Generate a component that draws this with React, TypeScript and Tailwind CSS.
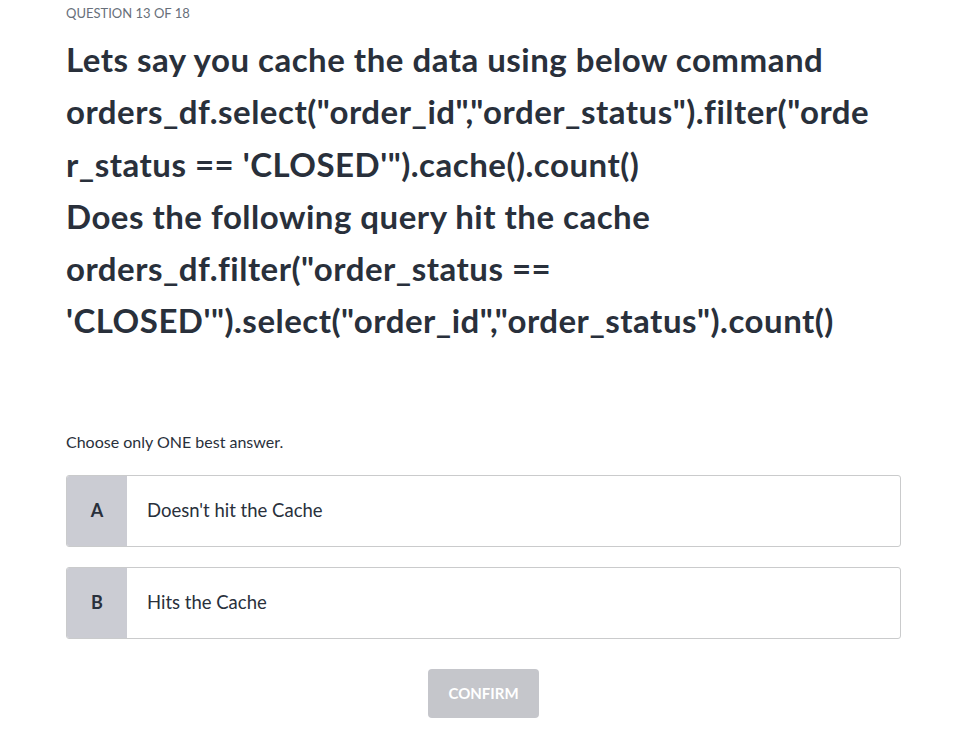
import React from 'react';

const titleLines = [
  'Lets say you cache the data using below command',
  'orders_df.select("order_id","order_status").filter("orde',
  "r_status == 'CLOSED'\").cache().count()",
  'Does the following query hit the cache',
  'orders_df.filter("order_status ==',
  "'CLOSED'\").select(\"order_id\",\"order_status\").count()",
];

const options = [
  { letter: 'A', text: "Doesn't hit the Cache" },
  { letter: 'B', text: 'Hits the Cache' },
];

const App: React.FC = () => {
  return (
    <div className="min-h-screen bg-white font-['Lato','Noto_Sans',sans-serif] text-[#29303b] [font-variant-ligatures:none]">
      <div className="ml-[66px] w-[835px] pt-[5px]">
        <div className="text-[13px] leading-[16px] text-[#686f7a]">QUESTION 13 OF 18</div>

        {/* question text */}
        <div className="mt-[12px] text-[33px] font-bold leading-[52.3px] tracking-[0.5px]">
          {titleLines.map((line, i) => (
            <div key={i} className="whitespace-nowrap">
              {line}
            </div>
          ))}
        </div>

        <div className="mt-[85px] text-[16px] leading-[20px]">Choose only ONE best answer.</div>

        <div className="mt-[23px] flex flex-col gap-[20px]">
          {options.map((opt) => (
            <div
              key={opt.letter}
              className="flex h-[72px] overflow-hidden rounded-[3px] border border-[#cacbcc] bg-white"
            >
              <div className="flex w-[60px] items-center justify-center bg-[#cbccd3] text-[18px] font-bold">
                {opt.letter}
              </div>
              <div className="flex items-center pl-[20px] pt-[1px] text-[18.5px]">{opt.text}</div>
            </div>
          ))}
        </div>

        <div className="mt-[30px] flex justify-center">
          <button className="h-[49px] w-[111px] rounded-[4px] bg-[#c5c6cb] text-[15px] font-bold text-white">
            CONFIRM
          </button>
        </div>
      </div>
    </div>
  );
};

export default App;
